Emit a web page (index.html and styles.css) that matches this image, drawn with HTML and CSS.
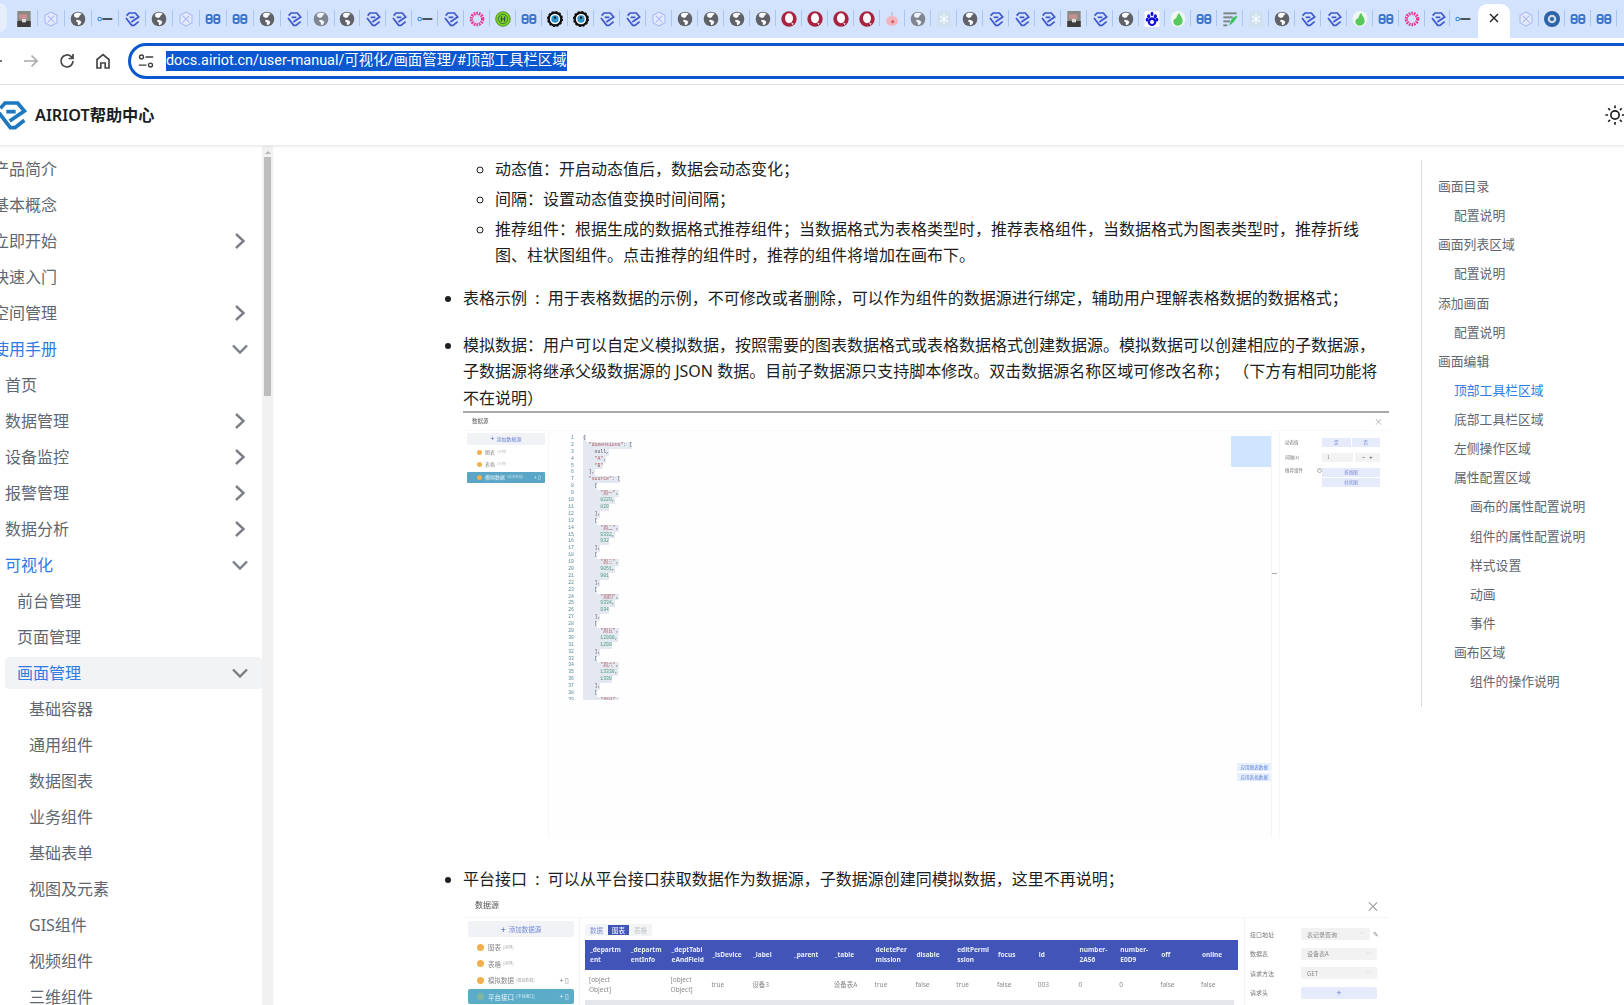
FILE: index.html
```html
<!DOCTYPE html>
<html lang="zh-CN">
<head>
<meta charset="utf-8">
<title>顶部工具栏区域 - AIRIOT帮助中心</title>
<link rel="stylesheet" href="styles.css">
</head>
<body>
<svg class="defs" aria-hidden="true">
  <symbol id="r" viewBox="0 0 24 24"><g fill="none" stroke="#4058cc" stroke-width="2.600"><path d="M4 7 7.500 3H17L22 9 11 16.500"/><path d="M3 10.500 11.500 21.500H15L22 16"/><path d="M8.500 9.500h7"/></g></symbol>
  <symbol id="logo" viewBox="0 0 24 24"><g fill="none" stroke="#1c78c0" stroke-width="2.800"><path d="M4 7 7.500 3H17L22 9 11 16.500"/><path d="M3 10.500 11.500 21.500H15L22 16"/><path d="M8.500 9.500h7"/></g></symbol>
  <symbol id="hex" viewBox="0 0 24 24"><g fill="#e4ebfd" stroke="#a9b9f2" stroke-width="1.600"><path d="M12 1.500 21 6.500v11l-9 5-9-5v-11z"/><path d="M7 7 17 17M17 7 7 17" fill="none"/></g></symbol>
  <symbol id="globe" viewBox="0 0 24 24"><circle cx="12" cy="12" r="11" fill="#5f6368"/><path d="M9 2.500 6 5l.5 3.500 4 2 3-1.500L15 6l2.500-1L15 2.500zM10 13l4 1 3 2-1.500 4L12 21.500 11.500 17 9 15.500z" fill="#fff"/></symbol>
  <symbol id="mini" viewBox="0 0 24 24"><circle cx="4" cy="12" r="2.600" fill="none" stroke="#2f8ae0" stroke-width="1.600"/><rect x="8" y="10.500" width="15" height="3" fill="#4a5560"/></symbol>
  <symbol id="bb" viewBox="0 0 24 24"><g fill="#3e76c9"><rect x="1" y="4.500" width="10.500" height="15" rx="4"/><rect x="12.500" y="4.500" width="10.500" height="15" rx="4"/></g><g fill="#dce8fb"><rect x="4" y="7.500" width="4.500" height="3"/><rect x="4" y="13.500" width="4.500" height="3"/><rect x="15.500" y="7.500" width="4.500" height="3"/><rect x="15.500" y="13.500" width="4.500" height="3"/></g></symbol>
  <symbol id="swirl" viewBox="0 0 24 24"><circle cx="12" cy="12" r="8.500" fill="none" stroke="#ea3b95" stroke-width="5" stroke-dasharray="2.500 1.300"/><circle cx="12" cy="12" r="4.500" fill="#d3e3fd"/></symbol>
  <symbol id="greenh" viewBox="0 0 24 24"><circle cx="12" cy="12" r="11" fill="#78d41e" stroke="#3b6b1e" stroke-width="1"/><circle cx="12" cy="12" r="7" fill="none" stroke="#345" stroke-width="1"/><path d="M9.500 8v8M14.500 8v8M9.500 12h5" stroke="#234" stroke-width="1.400"/></symbol>
  <symbol id="eye" viewBox="0 0 24 24"><circle cx="12" cy="12" r="9.500" fill="#fff" stroke="#111" stroke-width="3.500"/><circle cx="12" cy="12" r="11" fill="none" stroke="#111" stroke-width="2" stroke-dasharray="3 2.800"/><circle cx="12" cy="12" r="5.500" fill="#2b93c9"/><circle cx="12" cy="10" r="1.600" fill="#111"/></symbol>
  <symbol id="red" viewBox="0 0 24 24"><circle cx="12" cy="12" r="11.500" fill="#a8233f"/><ellipse cx="12" cy="11" rx="6" ry="7.500" fill="#fff"/><path d="M15 17l4 2-2 2z" fill="#fff"/></symbol>
  <symbol id="pig" viewBox="0 0 24 24"><path d="M12 1v7" stroke="#b98" stroke-width="1"/><ellipse cx="12" cy="15" rx="9" ry="7.500" fill="#f3b5bd"/><circle cx="13" cy="16" r="2.500" fill="#d8646f"/></symbol>
  <symbol id="snow" viewBox="0 0 24 24"><rect x="2" width="20" height="24" fill="#cfe0ee"/><path d="M12 4v16M6 8l12 8M18 8 6 16" stroke="#f4f9fc" stroke-width="2"/></symbol>
  <symbol id="paw" viewBox="0 0 24 24"><rect x="1" y="0" width="22" height="24" fill="#fff"/><g fill="#1414d8"><ellipse cx="7" cy="8" rx="2.300" ry="3.200"/><ellipse cx="12" cy="4.500" rx="2.300" ry="3.200"/><ellipse cx="17" cy="8" rx="2.300" ry="3.200"/><ellipse cx="4.500" cy="13" rx="2" ry="2.800"/><ellipse cx="19.500" cy="13" rx="2" ry="2.800"/><ellipse cx="12" cy="16" rx="6.500" ry="6.500"/></g><circle cx="12" cy="16.500" r="3" fill="#fff"/></symbol>
  <symbol id="blob" viewBox="0 0 24 24"><ellipse cx="12" cy="12" rx="11" ry="12" fill="#eef7f0"/><path d="M14 3c1 4 5 7 5 12 0 4-3 7-7 7s-7-3-7-6c0-4 4-4 5-7 .600-2 2-5 4-6z" fill="#58c85e"/></symbol>
  <symbol id="feather" viewBox="0 0 24 24"><g fill="#7f8a88"><rect x="2" y="2" width="20" height="3"/><rect x="2" y="8" width="14" height="3"/><rect x="2" y="14" width="10" height="3"/><rect x="2" y="20" width="6" height="3"/></g><path d="M23 7c-6 1-10 5-12 15 2-2 4-3 6-5 2-3 5-6 6-10z" fill="#34c45a"/></symbol>
  <symbol id="photo" viewBox="0 0 24 24"><rect x="2" width="20" height="24" fill="#8a8a84"/><rect x="2" y="15" width="20" height="9" fill="#3c3c3a"/><rect x="5" y="5" width="12" height="7" fill="#c69090"/><rect x="9" y="12" width="6" height="5" fill="#ddd"/></symbol>
  <symbol id="ring" viewBox="0 0 24 24"><circle cx="12" cy="12" r="12" fill="#2a63a8"/><circle cx="12" cy="12" r="6.500" fill="#cfd9e8"/><circle cx="12" cy="12" r="3" fill="#2a63a8"/></symbol>
</svg>

<div class="tabstrip">
  <span class="hover-tab"></span>
  <span class="tab"><svg class="fav"><use href="#photo"/></svg></span>
  <span class="tab"><svg class="fav"><use href="#hex"/></svg></span>
  <span class="tab"><svg class="fav"><use href="#globe"/></svg></span>
  <span class="tab"><svg class="fav"><use href="#mini"/></svg></span>
  <span class="tab"><svg class="fav"><use href="#r"/></svg></span>
  <span class="tab"><svg class="fav"><use href="#globe"/></svg></span>
  <span class="tab"><svg class="fav"><use href="#hex"/></svg></span>
  <span class="tab"><svg class="fav"><use href="#bb"/></svg></span>
  <span class="tab"><svg class="fav"><use href="#bb"/></svg></span>
  <span class="tab"><svg class="fav"><use href="#globe"/></svg></span>
  <span class="tab"><svg class="fav"><use href="#r"/></svg></span>
  <span class="tab"><svg class="fav dim"><use href="#globe"/></svg></span>
  <span class="tab"><svg class="fav"><use href="#globe"/></svg></span>
  <span class="tab"><svg class="fav"><use href="#r"/></svg></span>
  <span class="tab"><svg class="fav"><use href="#r"/></svg></span>
  <span class="tab"><svg class="fav"><use href="#mini"/></svg></span>
  <span class="tab"><svg class="fav"><use href="#r"/></svg></span>
  <span class="tab"><svg class="fav"><use href="#swirl"/></svg></span>
  <span class="tab"><svg class="fav"><use href="#greenh"/></svg></span>
  <span class="tab"><svg class="fav"><use href="#bb"/></svg></span>
  <span class="tab"><svg class="fav"><use href="#eye"/></svg></span>
  <span class="tab"><svg class="fav"><use href="#eye"/></svg></span>
  <span class="tab"><svg class="fav"><use href="#r"/></svg></span>
  <span class="tab"><svg class="fav"><use href="#r"/></svg></span>
  <span class="tab"><svg class="fav"><use href="#hex"/></svg></span>
  <span class="tab"><svg class="fav"><use href="#globe"/></svg></span>
  <span class="tab"><svg class="fav"><use href="#globe"/></svg></span>
  <span class="tab"><svg class="fav"><use href="#globe"/></svg></span>
  <span class="tab"><svg class="fav"><use href="#globe"/></svg></span>
  <span class="tab"><svg class="fav"><use href="#red"/></svg></span>
  <span class="tab"><svg class="fav"><use href="#red"/></svg></span>
  <span class="tab"><svg class="fav"><use href="#red"/></svg></span>
  <span class="tab"><svg class="fav"><use href="#red"/></svg></span>
  <span class="tab"><svg class="fav"><use href="#pig"/></svg></span>
  <span class="tab"><svg class="fav dim"><use href="#globe"/></svg></span>
  <span class="tab"><svg class="fav"><use href="#snow"/></svg></span>
  <span class="tab"><svg class="fav"><use href="#globe"/></svg></span>
  <span class="tab"><svg class="fav"><use href="#r"/></svg></span>
  <span class="tab"><svg class="fav"><use href="#r"/></svg></span>
  <span class="tab"><svg class="fav"><use href="#r"/></svg></span>
  <span class="tab"><svg class="fav"><use href="#photo"/></svg></span>
  <span class="tab"><svg class="fav"><use href="#r"/></svg></span>
  <span class="tab"><svg class="fav"><use href="#globe"/></svg></span>
  <span class="tab"><svg class="fav"><use href="#paw"/></svg></span>
  <span class="tab"><svg class="fav"><use href="#blob"/></svg></span>
  <span class="tab"><svg class="fav"><use href="#bb"/></svg></span>
  <span class="tab"><svg class="fav"><use href="#feather"/></svg></span>
  <span class="tab"><svg class="fav"><use href="#snow"/></svg></span>
  <span class="tab"><svg class="fav"><use href="#globe"/></svg></span>
  <span class="tab"><svg class="fav"><use href="#r"/></svg></span>
  <span class="tab"><svg class="fav"><use href="#r"/></svg></span>
  <span class="tab"><svg class="fav"><use href="#blob"/></svg></span>
  <span class="tab"><svg class="fav"><use href="#bb"/></svg></span>
  <span class="tab"><svg class="fav"><use href="#swirl"/></svg></span>
  <span class="tab"><svg class="fav"><use href="#r"/></svg></span>
  <span class="tab tab-last"><svg class="fav"><use href="#mini"/></svg></span>
  <span class="tab-active"><svg class="close-icon" viewBox="0 0 12 12"><path d="M2 2l8 8M10 2l-8 8"/></svg></span>
  <span class="tab tab-after"><svg class="fav"><use href="#hex"/></svg></span>
  <span class="tab"><svg class="fav"><use href="#ring"/></svg></span>
  <span class="tab"><svg class="fav"><use href="#bb"/></svg></span>
  <span class="tab"><svg class="fav"><use href="#bb"/></svg></span>
</div>

<div class="toolbar">
  <span class="navbtn"><svg class="navicon" viewBox="0 0 20 20"><path d="M17 10H4M9.500 4.500 4 10l5.500 5.500"/></svg></span>
  <span class="navbtn"><svg class="navicon muted" viewBox="0 0 20 20"><path d="M3 10h13M10.500 4.500 16 10l-5.500 5.500"/></svg></span>
  <span class="navbtn"><svg class="navicon" viewBox="0 0 20 20"><path d="M16 10a6 6 0 1 1-1.800-4.300L16 7.500M16 3v4.500h-4.500"/></svg></span>
  <span class="navbtn"><svg class="navicon" viewBox="0 0 20 20"><path d="M4 17V8.500L10 3.500l6 5V17h-3.800v-5H7.800v5z"/></svg></span>
  <div class="omnibox">
    <svg class="tune" viewBox="0 0 20 20"><circle cx="5" cy="5.500" r="2.200"/><path d="M9.500 5.500H18M2 14.500h8.500"/><circle cx="15" cy="14.500" r="2.200"/></svg>
    <span class="url">docs.airiot.cn/user-manual/可视化/画面管理/#顶部工具栏区域</span>
  </div>
</div>

<header class="sitebar">
  <svg class="brand-logo"><use href="#logo"/></svg>
  <span class="brand-name">AIRIOT帮助中心</span>
  <svg class="sun" viewBox="0 0 24 24"><circle cx="12" cy="12" r="4.500"/><path d="M12 1.500v3M12 19.500v3M1.500 12h3M19.500 12h3M4.600 4.600l2 2M17.400 17.400l2 2M19.400 4.600l-2 2M6.600 17.400l-2 2"/></svg>
</header>

<div class="page">
  <aside class="sidebar">
    <nav class="menu">
      <ul class="menu-list">
        <li class="row"><span>产品简介</span></li>
        <li class="row"><span>基本概念</span></li>
        <li class="row"><span>立即开始</span><svg class="caret" viewBox="0 0 20 20"><path d="M6 3l7.500 7L6 17"/></svg></li>
        <li class="row"><span>快速入门</span></li>
        <li class="row"><span>空间管理</span><svg class="caret" viewBox="0 0 20 20"><path d="M6 3l7.500 7L6 17"/></svg></li>
        <li class="row blue"><span>使用手册</span><svg class="caret" viewBox="0 0 20 20"><path d="M3 6.500l7 7 7-7"/></svg></li>
        <li>
          <ul class="menu-list nested">
            <li class="row"><span>首页</span></li>
            <li class="row"><span>数据管理</span><svg class="caret" viewBox="0 0 20 20"><path d="M6 3l7.500 7L6 17"/></svg></li>
            <li class="row"><span>设备监控</span><svg class="caret" viewBox="0 0 20 20"><path d="M6 3l7.500 7L6 17"/></svg></li>
            <li class="row"><span>报警管理</span><svg class="caret" viewBox="0 0 20 20"><path d="M6 3l7.500 7L6 17"/></svg></li>
            <li class="row"><span>数据分析</span><svg class="caret" viewBox="0 0 20 20"><path d="M6 3l7.500 7L6 17"/></svg></li>
            <li class="row blue"><span>可视化</span><svg class="caret" viewBox="0 0 20 20"><path d="M3 6.500l7 7 7-7"/></svg></li>
            <li>
              <ul class="menu-list nested">
                <li class="row"><span>前台管理</span></li>
                <li class="row"><span>页面管理</span></li>
                <li class="row blue current"><span>画面管理</span><svg class="caret" viewBox="0 0 20 20"><path d="M3 6.500l7 7 7-7"/></svg></li>
                <li>
                  <ul class="menu-list nested">
                    <li class="row"><span>基础容器</span></li>
                    <li class="row"><span>通用组件</span></li>
                    <li class="row"><span>数据图表</span></li>
                    <li class="row"><span>业务组件</span></li>
                    <li class="row"><span>基础表单</span></li>
                    <li class="row"><span>视图及元素</span></li>
                    <li class="row"><span>GIS组件</span></li>
                    <li class="row"><span>视频组件</span></li>
                    <li class="row"><span>三维组件</span></li>
                  </ul>
                </li>
              </ul>
            </li>
          </ul>
        </li>
      </ul>
    </nav>
    <div class="scrolltrack"><span class="scroll-up"></span><span class="scrollthumb"></span></div>
  </aside>

  <main class="article">
    <ul class="sublist">
      <li>动态值：开启动态值后，数据会动态变化；</li>
      <li>间隔：设置动态值变换时间间隔；</li>
      <li>推荐组件：根据生成的数据格式推荐组件；当数据格式为表格类型时，推荐表格组件，当数据格式为图表类型时，推荐折线图、柱状图组件。点击推荐的组件时，推荐的组件将增加在画布下。</li>
    </ul>
    <ul class="toplist">
      <li class="gap-a">表格示例<span class="spaced-colon"> : </span>用于表格数据的示例，不可修改或者删除，可以作为组件的数据源进行绑定，辅助用户理解表格数据的数据格式；</li>
      <li class="gap-b">模拟数据：用户可以自定义模拟数据，按照需要的图表数据格式或表格数据格式创建数据源。模拟数据可以创建相应的子数据源，子数据源将继承父级数据源的 JSON 数据。目前子数据源只支持脚本修改。双击数据源名称区域可修改名称； （下方有相同功能将不在说明）
        <div class="shot shot-one">
          <div class="shot-title"><span>数据源</span><span class="x">×</span></div>
          <div class="shot-body">
            <div class="s1-left">
              <div class="s1-add"><b>+</b> 添加数据源</div>
              <div class="s1-item"><i class="dot"></i>图表 <small>(示例)</small></div>
              <div class="s1-item"><i class="dot"></i>表格 <small>(示例)</small></div>
              <div class="s1-item on"><i class="dot"></i>模拟数据 <small>(模拟数据)</small><em>+ ▯</em></div>
            </div>
            <div class="s1-editor">
              <div class="code">
                <div class="ln"><i>1</i><code>{</code></div>
                <div class="ln"><i>2</i><code>  <b>"dimensions"</b>: [</code></div>
                <div class="ln"><i>3</i><code>    null,</code></div>
                <div class="ln"><i>4</i><code>    <b>"A"</b>,</code></div>
                <div class="ln"><i>5</i><code>    <b>"B"</b></code></div>
                <div class="ln"><i>6</i><code>  ],</code></div>
                <div class="ln"><i>7</i><code>  <b>"source"</b>: [</code></div>
                <div class="ln"><i>8</i><code>    [</code></div>
                <div class="ln"><i>9</i><code>      <b>"周一"</b>,</code></div>
                <div class="ln"><i>10</i><code>      <u>8220</u>,</code></div>
                <div class="ln"><i>11</i><code>      <u>820</u></code></div>
                <div class="ln"><i>12</i><code>    ],</code></div>
                <div class="ln"><i>13</i><code>    [</code></div>
                <div class="ln"><i>14</i><code>      <b>"周二"</b>,</code></div>
                <div class="ln"><i>15</i><code>      <u>9332</u>,</code></div>
                <div class="ln"><i>16</i><code>      <u>932</u></code></div>
                <div class="ln"><i>17</i><code>    ],</code></div>
                <div class="ln"><i>18</i><code>    [</code></div>
                <div class="ln"><i>19</i><code>      <b>"周三"</b>,</code></div>
                <div class="ln"><i>20</i><code>      <u>9051</u>,</code></div>
                <div class="ln"><i>21</i><code>      <u>901</u></code></div>
                <div class="ln"><i>22</i><code>    ],</code></div>
                <div class="ln"><i>23</i><code>    [</code></div>
                <div class="ln"><i>24</i><code>      <b>"周四"</b>,</code></div>
                <div class="ln"><i>25</i><code>      <u>9334</u>,</code></div>
                <div class="ln"><i>26</i><code>      <u>934</u></code></div>
                <div class="ln"><i>27</i><code>    ],</code></div>
                <div class="ln"><i>28</i><code>    [</code></div>
                <div class="ln"><i>29</i><code>      <b>"周五"</b>,</code></div>
                <div class="ln"><i>30</i><code>      <u>12990</u>,</code></div>
                <div class="ln"><i>31</i><code>      <u>1290</u></code></div>
                <div class="ln"><i>32</i><code>    ],</code></div>
                <div class="ln"><i>33</i><code>    [</code></div>
                <div class="ln"><i>34</i><code>      <b>"周六"</b>,</code></div>
                <div class="ln"><i>35</i><code>      <u>13330</u>,</code></div>
                <div class="ln"><i>36</i><code>      <u>1330</u></code></div>
                <div class="ln"><i>37</i><code>    ],</code></div>
                <div class="ln"><i>38</i><code>    [</code></div>
                <div class="ln ln-cut"><i>39</i><code>      <b>"周日"</b>,</code></div>
              </div>
              <div class="s1-editor-side">
                <div class="minimap"></div>
                <div class="apply">
                  <span>应用图表数据</span>
                  <span>应用表格数据</span>
                </div>
              </div>
            </div>
            <div class="s1-split"><span></span></div>
            <div class="s1-right">
              <div class="s1-row"><label>动态值</label><div class="s1-ctl two"><span>是</span><span>否</span></div></div>
              <div class="s1-row"><label>间隔(s)</label><div class="s1-ctl pair"><span class="in">1</span><span class="step">−&nbsp;&nbsp;&nbsp;+</span></div></div>
              <div class="s1-row top"><label>推荐组件<i class="info">!</i></label><div class="s1-ctl stack"><span>折线图</span><span>柱状图</span></div></div>
            </div>
          </div>
        </div>
      </li>
      <li class="gap-c">平台接口<span class="spaced-colon"> : </span>可以从平台接口获取数据作为数据源，子数据源创建同模拟数据，这里不再说明；
        <div class="shot shot-two">
          <div class="s2-title"><span>数据源</span><span class="x">×</span></div>
          <div class="s2-body">
            <div class="s2-left">
              <div class="s2-add"><b>+</b> 添加数据源</div>
              <div class="s2-item"><i class="dot"></i>图表 <small>[示例]</small></div>
              <div class="s2-item"><i class="dot"></i>表格 <small>[示例]</small></div>
              <div class="s2-item"><i class="dot"></i>模拟数据 <small>[模拟数据]</small><em>+ ▯</em></div>
              <div class="s2-item on"><i class="dot"></i>平台接口 <small>[平台接口]</small><em>+ ▯</em></div>
            </div>
            <div class="s2-main">
              <div class="s2-tabs"><span>数据</span><span class="sel">图表</span><span class="off">表格</span></div>
              <div class="s2-table">
                <div class="th">_departm ent</div>
                <div class="th">_departm entInfo</div>
                <div class="th">_deptTabl eAndField</div>
                <div class="th">_isDevice</div>
                <div class="th">_label</div>
                <div class="th">_parent</div>
                <div class="th">_table</div>
                <div class="th">deletePer mission</div>
                <div class="th">disable</div>
                <div class="th">editPermi ssion</div>
                <div class="th">focus</div>
                <div class="th">id</div>
                <div class="th">number-2A56</div>
                <div class="th">number-E0D9</div>
                <div class="th">off</div>
                <div class="th">online</div>
                <div class="td">[object Object]</div>
                <div class="td"></div>
                <div class="td">[object Object]</div>
                <div class="td">true</div>
                <div class="td">设备3</div>
                <div class="td"></div>
                <div class="td">设备表A</div>
                <div class="td">true</div>
                <div class="td">false</div>
                <div class="td">true</div>
                <div class="td">false</div>
                <div class="td">003</div>
                <div class="td">0</div>
                <div class="td">0</div>
                <div class="td">false</div>
                <div class="td">false</div>
              </div>
              <div class="s2-bar"></div>
            </div>
            <div class="s2-right">
              <div class="s2-row"><label>接口地址</label><span class="sel-box short">表记录查询<i>﹀</i></span><span class="pen">✎</span></div>
              <div class="s2-row"><label>数据表</label><span class="sel-box">设备表A<i>﹀</i></span></div>
              <div class="s2-row"><label>请求方法</label><span class="sel-box">GET<i>﹀</i></span></div>
              <div class="s2-row"><label>请求头</label><span class="sel-box plus">+</span></div>
            </div>
          </div>
        </div>
      </li>
    </ul>
  </main>

  <nav class="toc">
    <ul class="toc-list">
      <li>画面目录
        <ul class="toc-list"><li>配置说明</li></ul>
      </li>
      <li>画面列表区域
        <ul class="toc-list"><li>配置说明</li></ul>
      </li>
      <li>添加画面
        <ul class="toc-list"><li>配置说明</li></ul>
      </li>
      <li>画面编辑
        <ul class="toc-list">
          <li class="blue">顶部工具栏区域</li>
          <li>底部工具栏区域</li>
          <li>左侧操作区域</li>
          <li>属性配置区域
            <ul class="toc-list">
              <li>画布的属性配置说明</li>
              <li>组件的属性配置说明</li>
              <li>样式设置</li>
              <li>动画</li>
              <li>事件</li>
            </ul>
          </li>
          <li>画布区域
            <ul class="toc-list"><li>组件的操作说明</li></ul>
          </li>
        </ul>
      </li>
    </ul>
  </nav>
</div>
</body>
</html>
```

FILE: styles.css
```css
* { box-sizing: border-box; }
html, body { margin: 0; height: 1005px; overflow: hidden; background: #fff; }
body { font-family: "Noto Sans", "Noto Sans CJK SC", sans-serif; color: #1c1e21; font-size: 16px; }
ul { margin: 0; padding: 0; list-style: none; }
.defs { width: 0; height: 0; display: block; }

/* tab strip */
.tabstrip { height: 38px; background: #d3e3fd; display: flex; padding-left: 10.500px; position: relative; overflow: hidden; }
.hover-tab { position: absolute; left: -12px; top: 3px; width: 19px; height: 29px; border-radius: 8px; background: #e6eefc; }
.tab { flex: 0 0 25.960px; height: 38px; display: flex; align-items: center; justify-content: center; position: relative; }
.tab:nth-child(-n+13) { flex-basis: 27px; }
.tab::after { content: ""; position: absolute; right: 0; top: 10px; width: 1px; height: 16px; background: #a9c5f2; }
.tab-last::after { display: none; }
.fav { width: 16px; height: 16px; display: block; }
.dim { opacity: .72; }
.tab-active { flex: 0 0 32px; height: 38px; margin: 4px 0 0 2px; background: #fff; border-radius: 9px 9px 0 0; display: flex; align-items: flex-start; justify-content: center; padding-top: 8px; }
.tab-after { margin-left: 3px; }
.close-icon { width: 12px; height: 12px; fill: none; stroke: #1f1f1f; stroke-width: 1.400; }

/* toolbar */
.toolbar { height: 47px; display: flex; align-items: center; gap: 4px; margin-left: -21px; margin-right: -30px; border-bottom: 1px solid #dfe1e5; background: #fff; padding-bottom: 1px; }
.navbtn { flex: 0 0 32px; height: 32px; display: flex; align-items: center; justify-content: center; }
.navicon { width: 20px; height: 20px; fill: none; stroke: #474747; stroke-width: 1.700; }
.navicon.muted { stroke: #a9a9a9; }
.omnibox { flex: 1; height: 36px; margin-left: 5px; border: 3px solid #0b57d0; border-radius: 18px; display: flex; align-items: center; padding-left: 6px; gap: 11px; }
.tune { width: 18px; height: 18px; fill: none; stroke: #3c3c3c; stroke-width: 1.500; flex: none; }
.url { background: #0b57d0; color: #fff; font-family: Roboto, "Noto Sans CJK SC", sans-serif; font-size: 14.400px; line-height: 20px; white-space: nowrap; }

/* site header */
.sitebar { height: 61px; display: flex; align-items: center; margin-left: -5px; border-bottom: 1px solid #ececec; box-shadow: 0 1px 2px rgba(0, 0, 0, .06); position: relative; z-index: 1; }
.brand-logo { width: 32px; height: 36px; flex: none; }
.brand-name { margin: 0 0 3px 8px; font-size: 16.200px; font-weight: 600; color: #1c1e21; white-space: nowrap; }
.sun { width: 22px; height: 22px; margin-left: auto; margin-right: -2px; fill: none; stroke: #1c1e21; stroke-width: 1.800; flex: none; }

/* layout */
.page { display: flex; height: 860px; overflow: hidden; }

/* sidebar */
.sidebar { flex: 0 0 273px; display: flex; height: 860px; overflow: hidden; }
.menu { flex: 1; min-width: 0; margin-left: -19px; padding-top: 3px; }
.menu-list.nested { padding-left: 12px; }
.row { height: 32px; margin-top: 4px; padding: 0 12px; display: flex; align-items: center; justify-content: space-between; color: #606770; border-radius: 4px; white-space: nowrap; line-height: 20px; }
.row.blue { color: #2f7ae5; }
.row.current { background: #f2f3f5; }
.caret { width: 20px; height: 20px; flex: none; fill: none; stroke: #7b7f85; stroke-width: 2.400; }
.scrolltrack { flex: 0 0 11px; background: #f1f1f1; display: flex; flex-direction: column; align-items: center; }
.scroll-up { width: 0; height: 0; margin-top: 5px; border-left: 3px solid transparent; border-right: 3px solid transparent; border-bottom: 3px solid #b5b5b5; }
.scrollthumb { width: 7px; height: 239px; margin-top: 3px; background: #bdbdbd; }

/* article */
.article { flex: 0 0 926px; width: 926px; min-width: 0; margin-left: 190px; padding-top: 10px; line-height: 26.400px; }
.sublist { padding-left: 32px; list-style: circle; }
.sublist li { margin-bottom: 3.600px; }
.toplist { list-style: disc; }
.gap-a { margin-top: 16px; }
.gap-b { margin-top: 20.600px; }
.gap-c { margin-top: 28px; }
.spaced-colon { word-spacing: 4px; font-family: "Noto Sans", sans-serif; }
.shot { display: flex; flex-direction: column; font-family: "Noto Sans CJK SC", sans-serif; filter: blur(.35px); color: #555; overflow: hidden; }

/* screenshot one */
.shot-one { height: 427px; border-top: 2px solid #a9a9a9; font-size: 5px; line-height: 1.300; background: #fff; }
.shot-title { height: 18px; display: flex; justify-content: space-between; align-items: center; padding: 0 6px 0 9px; font-size: 5.500px; border-bottom: 1px solid #f9f9f9; flex: none; }
.shot-title .x { font-size: 9px; color: #aaa; }
.shot-body { flex: 1; display: flex; min-height: 0; }
.s1-left { flex: 0 0 86px; padding: 2px 3px 0 4px; border-right: 1px solid #f7f7f7; display: flex; flex-direction: column; }
.s1-add { height: 12px; background: #f0f2f6; border-radius: 1px; display: flex; align-items: center; justify-content: center; gap: 2px; color: #6b7fd6; margin-bottom: 1px; flex: none; }
.s1-add b { font-size: 7px; color: #4a5fc4; font-weight: 400; }
.s1-item { height: 12.300px; display: flex; align-items: center; padding-left: 10px; color: #888; white-space: nowrap; }
.dot { width: 5px; height: 5px; border-radius: 50%; background: #f2b04c; margin-right: 3px; flex: none; }
.s1-item small { font-size: 3.500px; color: #bbb; margin-left: 2px; }
.s1-item.on { background: #5ba6c6; color: #eaf6fb; border-radius: 1px; height: 11px; margin-top: 1px; }
.s1-item.on small { color: #b8dcea; }
.s1-item em { font-style: normal; margin-left: auto; padding-right: 4px; color: #dff; }
.s1-editor { flex: 0 0 723px; background: #fefefe; display: flex; border-right: 1px solid #f5f5f5; }
.code { flex: 0 0 682px; padding-top: 4px; overflow: hidden; }
.ln { height: 6.900px; display: flex; font-family: "Liberation Mono", "Noto Sans CJK SC", monospace; font-size: 4.800px; line-height: 6.900px; }
.ln i { flex: 0 0 25px; text-align: right; font-style: normal; color: #5a8a96; }
.ln code { margin-left: 9px; font-family: inherit; background: #e4e9f1; white-space: pre; color: #556; }
.ln b { font-weight: 400; color: #a8555f; }
.ln u { text-decoration: none; color: #4f9a80; }
.ln-cut { height: 3.500px; overflow: hidden; }
.s1-editor-side { flex: 1; display: flex; flex-direction: column; justify-content: space-between; padding: 5px 0 57px; min-width: 0; }
.minimap { height: 31px; background: #cfe4ff; }
.apply { display: flex; flex-direction: column; gap: 2px; align-items: flex-end; font-size: 4.600px; color: #5f88d6; white-space: nowrap; }
.apply span { background: #e8eefb; padding: 0 3px; height: 8px; line-height: 8px; }
.s1-split { flex: 0 0 8px; border-right: 1px solid #f6f6f6; padding-top: 142px; }
.s1-split span { display: block; width: 5px; height: 1px; background: #aaa; }
.s1-right { flex: 1; min-width: 0; padding: 7px 9px 0 5px; display: flex; flex-direction: column; gap: 6px; font-size: 4.500px; color: #777; }
.s1-row { display: flex; align-items: center; }
.s1-row.top { align-items: flex-start; }
.s1-row label { flex: 0 0 37px; display: flex; justify-content: space-between; white-space: nowrap; }
.info { width: 5px; height: 5px; border: 1px solid #aaa; border-radius: 50%; font-style: normal; font-size: 3px; line-height: 3px; text-align: center; }
.s1-ctl { flex: 1; min-width: 0; display: flex; gap: 1px; color: #7688d8; }
.s1-ctl span { flex: 1; height: 9px; line-height: 9px; text-align: center; background: #e6ebfb; }
.s1-ctl.pair { gap: 2px; }
.s1-ctl.pair .in { background: #f3f3f3; color: #777; text-align: left; padding-left: 5px; }
.s1-ctl.pair .step { background: #f3f3f3; color: #445; font-size: 6px; }
.s1-ctl.stack { flex-direction: column; }
.s1-ctl.stack span { flex: none; }

/* screenshot two */
.shot-two { height: 130px; margin-top: 1px; font-size: 7px; line-height: 1.300; }
.s2-title { height: 25px; padding: 0 9px 0 12px; display: flex; justify-content: space-between; align-items: center; font-size: 8px; color: #555; border-bottom: 1px solid #f6f6f6; flex: none; }
.s2-title .x { font-size: 14px; color: #999; }
.s2-body { flex: 1; display: flex; min-height: 0; }
.s2-left { flex: 0 0 117px; padding: 3px 5px 0 5px; border-right: 1px solid #f3f3f3; }
.s2-add { height: 16px; background: #f0f2f6; border-radius: 2px; display: flex; align-items: center; justify-content: center; gap: 3px; color: #7b8dd8; font-size: 6.500px; margin-bottom: 2px; }
.s2-add b { color: #4a5fc4; font-size: 9px; font-weight: 400; }
.s2-item { height: 16.300px; display: flex; align-items: center; padding-left: 9px; color: #888; font-size: 6.500px; white-space: nowrap; }
.s2-item .dot { width: 7px; height: 7px; margin-right: 4px; }
.s2-item small { font-size: 4px; color: #aaa; margin-left: 2px; }
.s2-item em { font-style: normal; margin-left: auto; padding-right: 5px; font-size: 7px; color: #777; }
.s2-item.on { background: #5bacc8; color: #e9f6fa; border-radius: 2px; height: 15px; margin-top: 1px; }
.s2-item.on .dot { background: #7fb7a0; }
.s2-item.on small, .s2-item.on em { color: #dff1f6; }
.s2-main { flex: 0 0 663px; padding: 6px 6px 0 5px; }
.s2-tabs { display: inline-flex; gap: 1px; background: #f3f4f6; padding: 1px; height: 12px; font-size: 6.500px; color: #7f8fd8; align-items: center; margin-bottom: 4px; }
.s2-tabs span { width: 21px; line-height: 10px; text-align: center; }
.s2-tabs .sel { background: #4155b9; color: #fff; }
.s2-tabs .off { color: #c4c4c4; }
.s2-table { display: grid; grid-template-columns: repeat(16, 40.800px); width: 653px; }
.th { height: 30px; background: #4155b9; color: #e8ecfa; font-size: 6.500px; font-weight: 700; line-height: 10.500px; padding: 0 3px 0 5px; display: flex; align-items: center; overflow-wrap: anywhere; font-family: "Noto Sans", sans-serif; }
.td { height: 30px; font-size: 6.500px; line-height: 10.500px; padding: 0 3px 0 4px; display: flex; align-items: center; color: #8a8a8a; font-family: "Noto Sans", "Noto Sans CJK SC", sans-serif; }
.s2-bar { height: 20px; background: #e4e6ec; width: 649px; }
.s2-right { flex: 1; min-width: 0; border-left: 1px solid #f3f3f3; padding: 10px 12px 0 5px; display: flex; flex-direction: column; gap: 7.500px; font-size: 6px; color: #777; }
.s2-row { display: flex; align-items: center; height: 12px; }
.s2-row label { flex: 0 0 51px; white-space: nowrap; }
.sel-box { flex: 1; min-width: 0; height: 12px; border-radius: 2px; background: #f2f2f2; display: flex; align-items: center; justify-content: space-between; padding: 0 6px; color: #888; }
.sel-box i { font-style: normal; color: #ccc; font-size: 5px; }
.sel-box.short { flex: 0 0 69px; }
.sel-box.plus { justify-content: center; background: #e5ebfb; color: #6a80df; font-size: 9px; }
.pen { margin-left: 3px; color: #888; font-size: 7px; }

/* toc */
.toc { flex: none; margin-left: 32px; margin-top: 14px; height: 547px; width: 202px; border-left: 1px solid #dadde1; padding: 8px 0 0 16px; font-size: 12.800px; line-height: 21.120px; color: #606770; }
.toc-list .toc-list { padding-left: 16px; }
.toc-list li { margin-top: 8px; }
.toc-list .blue { color: #2f7ae5; }
```
